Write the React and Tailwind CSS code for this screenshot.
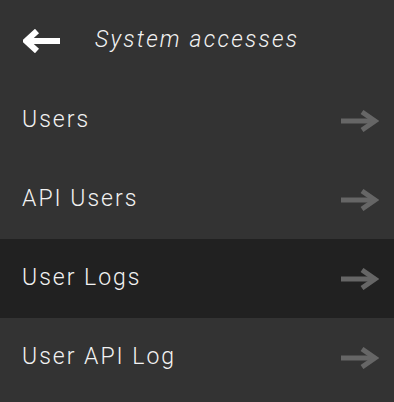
import React from "react";

const items = [
  { label: "Users", active: false },
  { label: "API Users", active: false },
  { label: "User Logs", active: true },
  { label: "User API Log", active: false },
];

const ArrowRight = () => (
  <svg width="38" height="22" viewBox="0 0 38 22" fill="none">
    <path d="M0 11h32" stroke="#666666" strokeWidth="5" />
    <path d="M21 2l13 9-13 9" stroke="#666666" strokeWidth="5" strokeLinejoin="miter" />
  </svg>
);

const ArrowLeft = () => (
  <svg width="37" height="24" viewBox="0 0 37 24" fill="none">
    <path d="M37 12H6" stroke="#ffffff" strokeWidth="6" />
    <path d="M14 2L3 12l11 10" stroke="#ffffff" strokeWidth="6" strokeLinejoin="miter" />
  </svg>
);

export default function App() {
  return (
    <div
      className="h-[402px] w-[394px] bg-[#333333] text-[#eeeeee]"
      style={{ fontFamily: "Roboto, 'Liberation Sans', sans-serif" }}
    >
      <div className="flex h-[81px] items-center pl-[23px]">
        <ArrowLeft />
        <span className="ml-[35px] text-[23px] font-light italic tracking-[2.2px] text-[#f2f2f2]">
          System accesses
        </span>
      </div>
      <nav>
        {items.map((item) => (
          <div
            key={item.label}
            className={`flex h-[79px] items-center justify-between pl-[22px] pr-[15px] ${
              item.active ? "bg-[#212121]" : ""
            }`}
          >
            <span className="text-[23px] font-light tracking-[2px] text-[#f2f2f2]">{item.label}</span>
            <ArrowRight />
          </div>
        ))}
      </nav>
    </div>
  );
}
